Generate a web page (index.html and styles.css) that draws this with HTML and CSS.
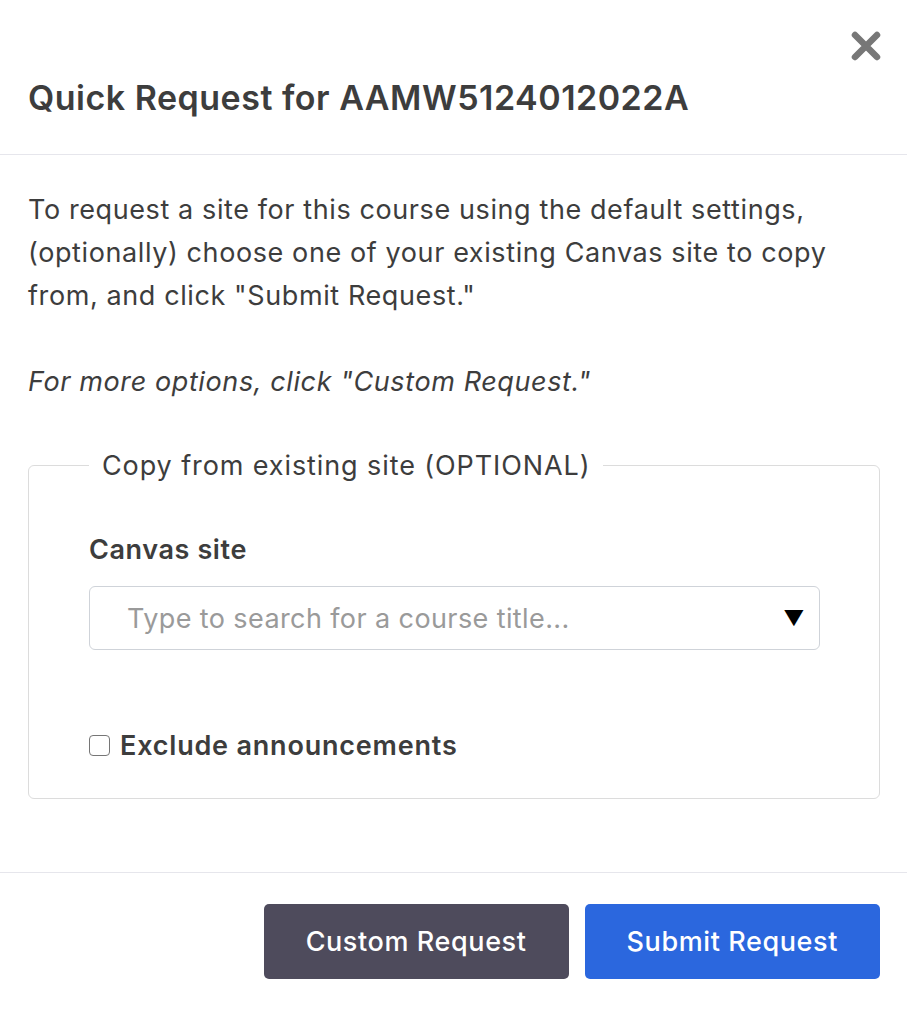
FILE: index.html
```html
<!DOCTYPE html>
<html>
<head>
<meta charset="utf-8">
<link rel="stylesheet" href="styles.css">
</head>
<body>
<div class="modal">
  <div class="modal-header">
    <button class="close" aria-label="Close">
      <svg width="32" height="32" viewBox="0 0 32 32"><path d="M5 5 L27 27 M27 5 L5 27" stroke="#777" stroke-width="6.5" stroke-linecap="round"/></svg>
    </button>
    <h1 class="title">Quick Request for AAMW5124012022A</h1>
  </div>
  <div class="modal-body">
    <p class="intro">To request a site for this course using the default settings, (optionally) choose one of your existing Canvas site to copy from, and click "Submit Request."</p>
    <p class="note">For more options, click "Custom Request."</p>
    <fieldset class="copy-box">
      <legend class="legend">Copy from existing site (OPTIONAL)</legend>
      <div class="field-label">Canvas site</div>
      <div class="select">
        <span class="placeholder">Type to search for a course title...</span>
        <span class="caret">▼</span>
      </div>
      <label class="check-row">
        <span class="checkbox"></span>
        <span class="check-label">Exclude announcements</span>
      </label>
    </fieldset>
  </div>
  <div class="modal-footer">
    <button class="btn btn-secondary">Custom Request</button>
    <button class="btn btn-primary">Submit Request</button>
  </div>
</div>
</body>
</html>
```
FILE: styles.css
```css
html, body {
  margin: 0;
  padding: 0;
  background: #fff;
}
body {
  font-family: Inter, "Noto Sans", sans-serif;
  color: #3d3d3d;
  letter-spacing: 0.6px;
}
.modal {
  width: 907px;
}
.modal-header {
  display: flex;
  flex-direction: column;
  padding: 30px 25px 36px 28px;
  border-bottom: 1px solid #e6e6ec;
}
.close {
  align-self: flex-end;
  width: 32px;
  height: 34px;
  padding: 0;
  border: 0;
  background: none;
  display: flex;
  align-items: flex-start;
}
.title {
  margin: 14px 0 0;
  font-size: 34px;
  line-height: 40px;
  font-weight: 600;
  letter-spacing: 0.5px;
  color: #3d3d3d;
}
.modal-body {
  padding: 33px 27px 73px 28px;
}
.intro, .note {
  margin: 0;
  font-size: 27px;
  line-height: 43px;
}
.intro {
  margin-bottom: 43px;
}
.note {
  font-style: italic;
  margin-bottom: 41px;
}
.copy-box {
  margin: 0;
  border: 1px solid #dcdcdc;
  border-radius: 6px;
  padding: 0 59px 31px 60px;
}
.legend {
  margin-left: 0;
  padding: 0 13px;
  font-size: 27px;
  line-height: 43px;
  letter-spacing: 0.9px;
}
.field-label {
  margin-top: 41px;
  font-size: 27px;
  line-height: 43px;
  font-weight: 600;
}
.select {
  margin-top: 15px;
  height: 62px;
  border: 1px solid #cfd3d9;
  border-radius: 6px;
  display: flex;
  align-items: center;
  justify-content: space-between;
  padding: 0 14px 0 37px;
}
.placeholder {
  font-size: 27px;
  color: #9a9a9a;
  letter-spacing: 0.4px;
}
.caret {
  font-size: 21px;
  color: #000;
}
.check-row {
  margin-top: 74px;
  display: flex;
  align-items: center;
  height: 43px;
}
.checkbox {
  width: 19px;
  height: 19px;
  border: 1px solid #767676;
  border-radius: 4px;
  margin-right: 10px;
}
.check-label {
  font-size: 27px;
  font-weight: 600;
  letter-spacing: 0.8px;
}
.modal-footer {
  border-top: 1px solid #e6e6ec;
  display: flex;
  justify-content: flex-end;
  gap: 16px;
  padding: 31px 27px 40px;
}
.btn {
  height: 75px;
  border: 0;
  border-radius: 5px;
  padding: 0 42px;
  font-family: Inter, "Noto Sans", sans-serif;
  font-size: 27px;
  font-weight: 500;
  letter-spacing: 0.6px;
  color: #fff;
}
.btn-secondary {
  background: #4e4b5c;
}
.btn-primary {
  background: #2b67de;
}
```
